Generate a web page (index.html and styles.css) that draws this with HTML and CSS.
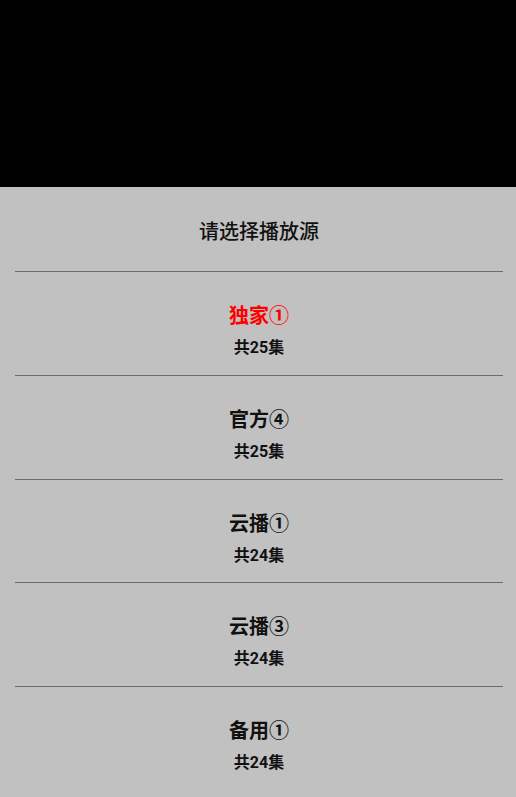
FILE: index.html
```html
<!DOCTYPE html>
<html lang="zh-CN">
<head>
<meta charset="utf-8">
<title>请选择播放源</title>
<link rel="stylesheet" href="styles.css">
</head>
<body>
<div class="screen">
  <div class="backdrop"></div>
  <div class="sheet">
    <div class="title">请选择播放源</div>
    <ul class="list">
      <li class="item active"><div class="name">独家①</div><div class="count">共25集</div></li>
      <li class="item"><div class="name">官方④</div><div class="count">共25集</div></li>
      <li class="item"><div class="name">云播①</div><div class="count">共24集</div></li>
      <li class="item"><div class="name">云播③</div><div class="count">共24集</div></li>
      <li class="item"><div class="name">备用①</div><div class="count">共24集</div></li>
    </ul>
  </div>
</div>
</body>
</html>
```
FILE: styles.css
```css
html, body {
  margin: 0;
  padding: 0;
  height: 100%;
  background: #000;
  font-family: Roboto, "Noto Sans CJK SC", "Noto Sans", sans-serif;
}
.screen {
  display: flex;
  flex-direction: column;
  height: 797px;
  overflow: hidden;
}
.backdrop {
  height: 187px;
  flex: none;
  background: #000;
}
.sheet {
  flex: 1;
  background: #c1c1c1;
  padding: 0 13px 0 15px;
}
.title {
  height: 85px;
  box-sizing: border-box;
  padding-top: 31px;
  line-height: 28px;
  font-size: 20px;
  font-weight: 500;
  color: #111;
  text-align: center;
  border-bottom: 1px solid #6c6c6c;
}
.list {
  list-style: none;
  margin: 0;
  padding: 0;
}
.item {
  height: 103.75px;
  box-sizing: border-box;
  border-bottom: 1px solid #6c6c6c;
  text-align: center;
  padding-top: 31px;
}
.item:last-child {
  border-bottom: none;
}
.name {
  font-size: 20px;
  line-height: 26px;
  font-weight: bold;
  color: #111;
}
.item.active .name {
  color: #f00;
}
.count {
  margin-top: 8px;
  font-size: 16px;
  line-height: 22px;
  font-weight: bold;
  color: #111;
}
```
